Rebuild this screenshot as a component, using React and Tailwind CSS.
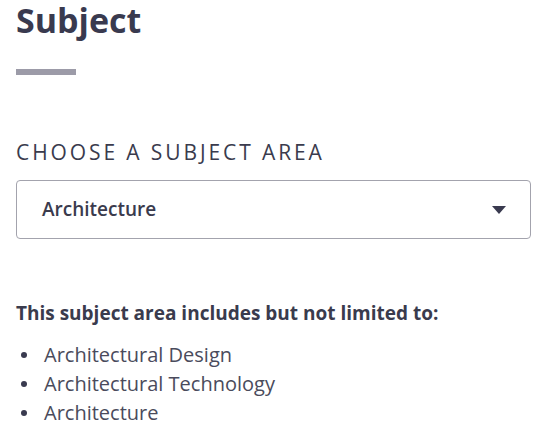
import React from 'react';

const items = ['Architectural Design', 'Architectural Technology', 'Architecture'];

export default function App() {
  return (
    <div className="min-h-screen bg-white px-4 text-[#393a4f]" style={{ fontFamily: '"Open Sans", "Noto Sans", sans-serif' }}>
      {/* Heading */}
      <h1 className="pb-[6px] text-[34px] font-bold leading-[40px]">Subject</h1>
      <div className="mt-[23px] h-[6px] w-[60px] bg-[#9c9ba8]" />

      {/* Subject select */}
      <h2 className="mt-[63px] text-[21px] font-normal leading-[28px] tracking-[2.9px] text-[#3a3b4d]">CHOOSE A SUBJECT AREA</h2>
      <button className="mt-[14px] flex h-[59px] w-[515px] items-center justify-between rounded-[4px] border border-[#a3a3ad] pl-[25px] pr-[24px] text-left">
        <span className="text-[19px] font-semibold text-[#3a3b4d]">Architecture</span>
        <svg width="14" height="8" viewBox="0 0 14 8">
          <path d="M0 0 H14 L7 8 Z" fill="#393a4f" />
        </svg>
      </button>

      {/* Description */}
      <p className="mt-[61px] text-[19px] font-bold leading-[26px] text-[#3a3b4d]">
        This subject area includes but not limited to:
      </p>
      <ul className="mt-[14px] pl-[5px]">
        {items.map((item) => (
          <li key={item} className="flex items-center text-[20px] leading-[29px] text-[#4a4b5c]">
            <span className="mr-[17px] h-[6px] w-[6px] rounded-full bg-[#393a4f]" />
            {item}
          </li>
        ))}
      </ul>
    </div>
  );
}
